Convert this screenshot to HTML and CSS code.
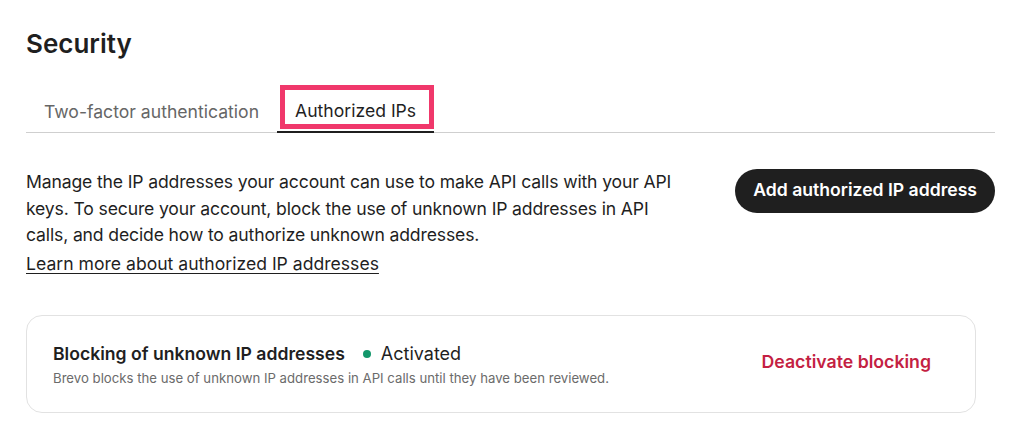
FILE: index.html
```html
<!DOCTYPE html>
<html lang="en">
<head>
<meta charset="utf-8">
<title>Security</title>
<link rel="stylesheet" href="styles.css">
</head>
<body>
<main class="page">
  <h1 class="title">Security</h1>
  <nav class="tabs">
    <a class="tab">Two-factor authentication</a>
    <a class="tab tab-active"><span class="tab-highlight">Authorized IPs</span></a>
  </nav>
  <section class="intro">
    <div class="intro-text">
      <p class="desc">Manage the IP addresses your account can use to make API calls with your API<br>keys. To secure your account, block the use of unknown IP addresses in API<br>calls, and decide how to authorize unknown addresses.</p>
      <a class="learn" href="#">Learn more about authorized IP addresses</a>
    </div>
    <button class="btn-primary">Add authorized IP address</button>
  </section>
  <section class="card">
    <div class="card-body">
      <div class="card-head">
        <span class="card-title">Blocking of unknown IP addresses</span>
        <span class="status"><span class="dot"></span>Activated</span>
      </div>
      <div class="card-sub">Brevo blocks the use of unknown IP addresses in API calls until they have been reviewed.</div>
    </div>
    <button class="btn-danger">Deactivate blocking</button>
  </section>
</main>
</body>
</html>
```
FILE: styles.css
```css
* { box-sizing: border-box; }
html, body { margin: 0; padding: 0; background: #ffffff; }
body {
  font-family: Inter, "Noto Sans", sans-serif;
  color: #1f1f1f;
}
.page {
  width: 1032px;
  padding: 28px 37px 0 26px;
}
.title {
  margin: 0;
  font-size: 26px;
  font-weight: 600;
  line-height: 32px;
  color: #1f1f1f;
}
.tabs {
  display: flex;
  align-items: flex-start;
  margin-top: 24px;
  height: 49px;
  border-bottom: 1px solid #cfcfcf;
}
.tab {
  display: block;
  padding: 17px 18px 0 18px;
  font-size: 17.6px;
  line-height: 22px;
  color: #666666;
  cursor: pointer;
}
.tab-active {
  align-self: stretch;
  padding: 0;
  color: #1f1f1f;
  border-bottom: 2px solid #1f1f1f;
  margin-bottom: -1px;
}
.tab-highlight {
  display: block;
  margin: 1px 0 0 3px;
  padding: 10px 13px 2px 10px;
  border: 5px solid #f0386b;
}
.intro {
  display: flex;
  justify-content: space-between;
  align-items: flex-start;
  margin-top: 36px;
}
.intro-text { width: 690px; }
.desc {
  margin: 0;
  font-size: 17.6px;
  line-height: 26.5px;
  letter-spacing: -0.15px;
  color: #1f1f1f;
}
.learn {
  display: inline-block;
  margin-top: 2px;
  font-size: 17.6px;
  line-height: 26.5px;
  color: #1f1f1f;
  text-decoration: underline;
  text-underline-offset: 3px;
}
.btn-primary {
  height: 44px;
  padding: 0 18px;
  border: none;
  border-radius: 22px;
  background: #1f1f1f;
  color: #ffffff;
  font-family: Inter, "Noto Sans", sans-serif;
  font-size: 17.6px;
  font-weight: 600;
  line-height: 22px;
  padding-bottom: 2px;
}
.card {
  display: flex;
  align-items: center;
  justify-content: space-between;
  width: 950px;
  height: 98px;
  margin-top: 38px;
  padding: 0 44px 0 26px;
  border: 1px solid #e2e2e2;
  border-radius: 16px;
}
.card-body { margin-top: 1px; }
.card-head {
  display: flex;
  align-items: center;
  gap: 18px;
  line-height: 22px;
}
.card-title {
  font-size: 17.6px;
  font-weight: 600;
  color: #1f1f1f;
}
.status {
  display: flex;
  align-items: center;
  gap: 10px;
  font-size: 18px;
  color: #1f1f1f;
}
.dot {
  width: 8px;
  height: 8px;
  border-radius: 50%;
  background: #13976b;
}
.card-sub {
  margin-top: 4px;
  font-size: 13.2px;
  line-height: 18px;
  color: #6b6b6b;
}
.btn-danger {
  margin-top: -4px;
  border: none;
  background: none;
  padding: 0;
  color: #c41f43;
  font-family: Inter, "Noto Sans", sans-serif;
  font-size: 17.7px;
  font-weight: 600;
  line-height: 22px;
}
```
